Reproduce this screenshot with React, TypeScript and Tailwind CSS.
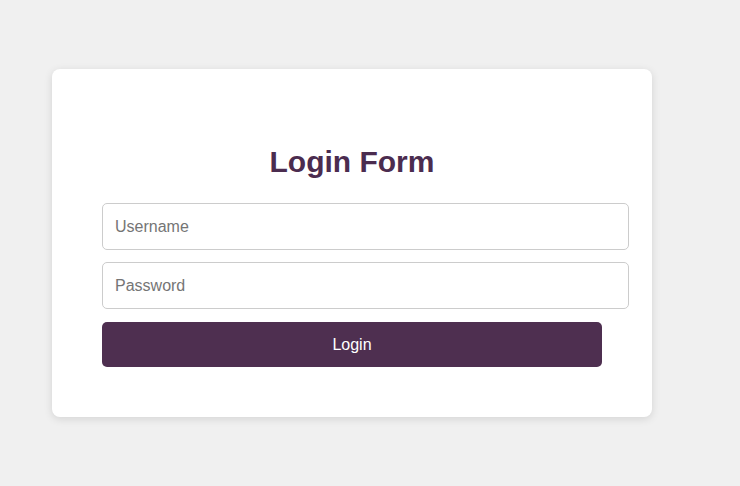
import React from "react";

const App = (): React.JSX.Element => {
  return (
    <div className="min-h-[486px] w-full bg-[#f0f0f0] pt-[69px] pl-[52px] font-['Liberation_Sans',Arial,sans-serif]">
      <div className="w-[600px] rounded-lg bg-white px-[50px] pt-[50px] pb-[50px] shadow-[0_2px_8px_rgba(0,0,0,0.12)]">
        <h2 className="mt-[25px] mb-[24px] text-center text-[30px] font-bold leading-[35px] text-[#4b2c4f]">
          Login Form
        </h2>
        <form className="flex flex-col" onSubmit={(e) => e.preventDefault()}>
          <input
            type="text"
            placeholder="Username"
            className="h-[47px] w-[527px] rounded-[5px] border border-[#cccccc] px-3 text-base text-[#333] outline-none placeholder:text-[#757575]"
          />
          <input
            type="password"
            placeholder="Password"
            className="mt-3 h-[47px] w-[527px] rounded-[5px] border border-[#cccccc] px-3 text-base text-[#333] outline-none placeholder:text-[#757575]"
          />
          <button
            type="submit"
            className="mt-[13px] h-[45px] w-[500px] rounded-[5px] bg-[#4e2f50] text-base text-white"
          >
            Login
          </button>
        </form>
      </div>
    </div>
  );
};

export default App;
